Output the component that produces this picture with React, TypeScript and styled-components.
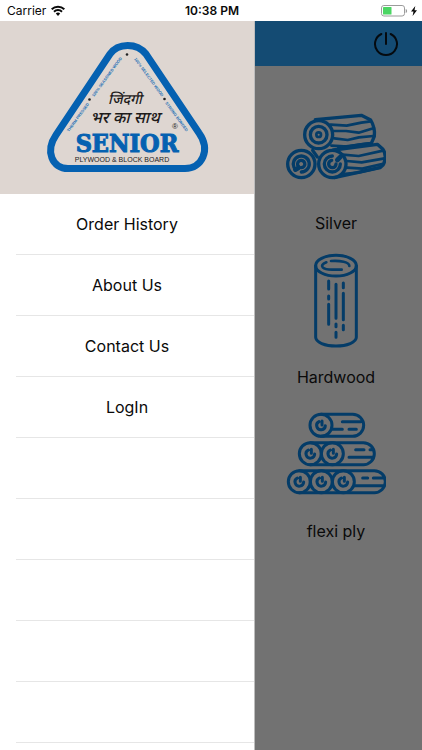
import React from "react";
import styled, { createGlobalStyle } from "styled-components";

const BLUE = "#0561b1";
const DIM_BLUE = "#043c68";

const GlobalStyle = createGlobalStyle`
  * { box-sizing: border-box; }
  body {
    margin: 0;
    background: #727272;
    color: #0a0a0a;
    font-family: Inter, "Liberation Sans", sans-serif;
  }
  button { border: 0; padding: 0; background: none; color: inherit; font: inherit; cursor: pointer; }
  svg { display: block; flex: none; }
`;

const Screen = styled.div`
  display: flex;
  flex-direction: column;
  min-height: 100vh;
`;

const StatusBar = styled.header`
  display: grid;
  grid-template-columns: 1fr auto 1fr;
  align-items: center;
  height: 21px;
  padding: 0 5px 0 7px;
  background: #fff;
  font-size: 12px;
`;

const StatusGroup = styled.div<{ $end?: boolean }>`
  display: flex;
  align-items: center;
  gap: ${(p) => (p.$end ? 3 : 5)}px;
  justify-content: ${(p) => (p.$end ? "flex-end" : "flex-start")};
`;

const Clock = styled.time`
  font-weight: 600;
`;

const Body = styled.div`
  display: flex;
  flex: 1;
`;

const Drawer = styled.aside`
  flex: none;
  width: 255px;
  background: #fff;
  border-right: 1px solid #bdbdbd;
`;

const Brand = styled.div`
  display: flex;
  justify-content: center;
  padding: 14px 0;
  background: #ded6d1;
`;

const Menu = styled.ul`
  margin: 0;
  padding: 0 0 0 16px;
  list-style: none;
`;

const MenuRow = styled.li`
  height: 61px;
  padding-right: 16px;
  border-bottom: 1px solid #e6e6e6;
`;

const MenuLink = styled.a`
  display: flex;
  align-items: center;
  justify-content: center;
  height: 100%;
  color: inherit;
  font-size: 16px;
  text-decoration: none;
`;

const Content = styled.main`
  flex: 1;
  min-width: 0;
  background: #727272;
`;

const TopBar = styled.div`
  display: flex;
  align-items: center;
  justify-content: flex-end;
  height: 45px;
  padding-right: 23px;
  background: #144b73;
`;

const Products = styled.div`
  display: flex;
  flex-direction: column;
  align-items: center;
  gap: 17px;
  padding: 31px 5px 17px 0;
`;

const Product = styled.button`
  display: flex;
  flex-direction: column;
  align-items: center;
  gap: 15px;
`;

const ProductName = styled.span`
  font-size: 16px;
  line-height: 22px;
`;

const Wifi = () => (
  <svg width="14" height="11" viewBox="0 0 14 11" fill="none" stroke="#0a0a0a" strokeWidth="2" aria-label="Wi-Fi">
    <path d="M.7 4.2a9 9 0 0 1 12.6 0" />
    <path d="M3 6.7a5.8 5.8 0 0 1 8 0" />
    <path d="M7 11 4.8 8.6a3.3 3.3 0 0 1 4.4 0z" fill="#0a0a0a" stroke="none" />
  </svg>
);

const Battery = () => (
  <svg width="27" height="12" viewBox="0 0 27 12" aria-label="Battery">
    <rect x=".5" y=".5" width="23" height="10.5" rx="2.4" fill="none" stroke="#9b9b9b" />
    <rect x="2" y="2" width="8.5" height="7.5" rx=".6" fill="#4bd563" />
    <path d="M24.7 4v4c1-.4 1.4-1 1.4-2s-.5-1.6-1.4-2z" fill="#9b9b9b" />
  </svg>
);

const Bolt = () => (
  <svg width="6" height="10" viewBox="0 0 6 10" aria-label="Charging">
    <path d="M4.3 0 0 5.600h2.500L1.600 10 6 4.200H3.500z" fill="#0a0a0a" />
  </svg>
);

const Logo = () => (
  <svg width="175" height="145" viewBox="40 35 175 145" role="img" aria-label="Senior Plywood and Block Board">
    <path
      d="M110 54C118 42.500 137 42.500 146 54L199 133C211 150 202 168.500 185 168.500H68C52 168.500 45 151 56 135Z"
      fill="none"
      stroke={BLUE}
      strokeWidth="7"
    />
    <g fill="#1c6fb6" fontFamily="'Liberation Sans Narrow', 'Liberation Sans', sans-serif" fontWeight="700" fontSize="4">
      <text transform="translate(69 132) rotate(-54)">THERM PRESSED</text>
      <text transform="translate(94 97) rotate(-54)">100% SEASONED WOOD</text>
      <text transform="translate(134 59) rotate(54)">100% SELECTED WOOD</text>
      <text transform="translate(165 103) rotate(54)">STRONG BONDED</text>
    </g>
    <g fill="#222">
      <circle cx="89.5" cy="99.5" r="1.3" />
      <circle cx="127" cy="54.5" r="1.3" />
      <circle cx="164.5" cy="99" r="1.3" />
    </g>
    <g fill="#1d1b1b" textAnchor="middle" fontFamily="'Noto Sans Devanagari', 'Noto Sans', sans-serif" fontStyle="italic" fontWeight="500">
      <text x="125" y="104" fontSize="14">जिंदगी</text>
      <text x="125" y="123" fontSize="16">भर का साथ</text>
    </g>
    <text x="127" y="152" textAnchor="middle" fill={BLUE} stroke={BLUE} fontFamily="'DejaVu Serif Condensed', 'DejaVu Serif', serif" fontWeight="700" fontSize="25">
      SENIOR
    </text>
    <text x="175" y="129" textAnchor="middle" fill="#222" fontFamily="'Liberation Sans', sans-serif" fontSize="8">
      ®
    </text>
    <text x="122" y="162" textAnchor="middle" fill="#222" fontFamily="'Liberation Sans Narrow', 'Liberation Sans', sans-serif" fontSize="7">
      PLYWOOD &amp; BLOCK BOARD
    </text>
  </svg>
);

const Power = () => (
  <svg width="26" height="26" viewBox="486 89 78 78" fill="none" stroke="#050a0f" strokeWidth="6" strokeLinecap="round">
    <path d="M511 98a33 33 0 1 0 28 0M525 95v33" />
  </svg>
);

const SilverLogs = () => (
  <svg width="100" height="100" viewBox="18 -24 300 300" fill="none" stroke={DIM_BLUE} strokeWidth="10" strokeLinecap="round" strokeLinejoin="round">
    <circle cx="116" cy="89" r="42" />
    <circle cx="116" cy="89" r="25" />
    <circle cx="116" cy="89" r="7" strokeWidth="8" />
    <circle cx="64" cy="177" r="41" />
    <path d="M42 187a24 24 0 1 1 22 14M56 185a11 11 0 1 1 8 3" />
    <path d="M46 194 56 188" strokeWidth="14" />
    <circle cx="157" cy="177" r="41" />
    <path d="M157 153a24 24 0 1 0 24 24M155 166a11 11 0 1 0 13 11" />
    <path d="M172 165 182 155" strokeWidth="14" />
    <path d="M106 44 244 31 272 45Q286 68 283 94L274 115 176 128" />
    <path d="M152 59 200 62 244 53 272 49M162 78h36l38 5 44-13M163 100l40 5 34-8 43-4M154 122l50 3 38-7 32-4" strokeWidth="8" />
    <path d="M160 135 292 118 309 133Q322 153 310 179L300 188 163 218" />
    <path d="M187 149 236 153 309 137M200 168l45 4 69-12M201 188l46 3 59-14M188 207l46-4 65-15" strokeWidth="8" />
    <path d="M98 136 112 156" />
  </svg>
);

const HardwoodLog = () => (
  <svg width="100" height="100" viewBox="18 183 300 300" fill="none" stroke={DIM_BLUE} strokeWidth="9" strokeLinecap="round">
    <ellipse cx="168" cy="227" rx="61" ry="31" />
    <path d="M107 227v215c0 15 28 26 61 26s61-11 61-26V227" />
    <path d="M153 213c27-2 55 3 55 15M139 217c-26 11-9 22 17 22h29" strokeWidth="8" />
    <path d="M146 273v24M146 318v9M146 343v60M168 283v102M168 402v8M168 427v15M190 279v14M190 310v79M190 406v13" />
  </svg>
);

const LogEnd = ({ x, y }: { x: number; y: number }) => (
  <g>
    <circle cx={x} cy={y} r="33" />
    <path d={`M${x - 6} ${y - 11}a13 13 0 1 0 19 12M${x + 3} ${y - 13}v12`} />
  </g>
);

const FlexiLogs = () => (
  <svg width="100" height="100" viewBox="18 135 300 300" fill="none" stroke={DIM_BLUE} strokeWidth="9" strokeLinecap="round">
    <LogEnd x={123} y={196} />
    <path d="M123 163h95a33 33 0 0 1 0 66h-95M187 185h55M156 208h31M207 208h22" />
    <LogEnd x={91} y={281} />
    <LogEnd x={157} y={281} />
    <path d="M91 248h159a33 33 0 0 1 0 66H91M227 269h25M270 269h8M207 292h73" />
    <LogEnd x={58} y={365} />
    <LogEnd x={124} y={365} />
    <LogEnd x={190} y={365} />
    <path d="M58 332h225a33 33 0 0 1 0 66H58M248 354h15M280 354h30M223 377h90" />
  </svg>
);

const menuItems = ["Order History", "About Us", "Contact Us", "LogIn"];
const emptyRows = [0, 1, 2, 3, 4];

const products = [
  { name: "Silver", Icon: SilverLogs },
  { name: "Hardwood", Icon: HardwoodLog },
  { name: "flexi ply", Icon: FlexiLogs },
];

export default function App() {
  return (
    <>
      <GlobalStyle />
      <Screen>
        <StatusBar>
          <StatusGroup>
            <span>Carrier</span>
            <Wifi />
          </StatusGroup>
          <Clock>10:38 PM</Clock>
          <StatusGroup $end>
            <Battery />
            <Bolt />
          </StatusGroup>
        </StatusBar>
        <Body>
          <Drawer>
            <Brand>
              <Logo />
            </Brand>
            <nav>
              <Menu>
                {menuItems.map((label) => (
                  <MenuRow key={label}>
                    <MenuLink href="#">{label}</MenuLink>
                  </MenuRow>
                ))}
                {emptyRows.map((row) => (
                  <MenuRow key={row} aria-hidden="true" />
                ))}
              </Menu>
            </nav>
          </Drawer>
          <Content>
            <TopBar>
              <button type="button" aria-label="Log out">
                <Power />
              </button>
            </TopBar>
            <Products>
              {products.map(({ name, Icon }) => (
                <Product key={name} type="button">
                  <Icon />
                  <ProductName>{name}</ProductName>
                </Product>
              ))}
            </Products>
          </Content>
        </Body>
      </Screen>
    </>
  );
}
